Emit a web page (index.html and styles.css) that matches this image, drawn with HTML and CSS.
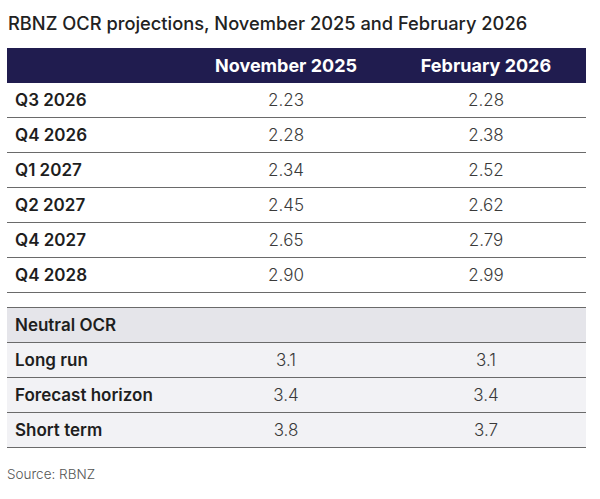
FILE: index.html
```html
<!DOCTYPE html>
<html>
<head>
<meta charset="utf-8">
<link rel="stylesheet" href="styles.css">
</head>
<body>
<div class="page">
  <h1 class="title">RBNZ OCR projections, November 2025 and February 2026</h1>
  <table class="grid">
    <colgroup><col class="c-label"><col class="c-val"><col class="c-val"></colgroup>
    <thead>
      <tr class="head"><th></th><th>November 2025</th><th>February 2026</th></tr>
    </thead>
    <tbody>
      <tr><td class="lbl">Q3 2026</td><td>2.23</td><td>2.28</td></tr>
      <tr><td class="lbl">Q4 2026</td><td>2.28</td><td>2.38</td></tr>
      <tr><td class="lbl">Q1 2027</td><td>2.34</td><td>2.52</td></tr>
      <tr><td class="lbl">Q2 2027</td><td>2.45</td><td>2.62</td></tr>
      <tr><td class="lbl">Q4 2027</td><td>2.65</td><td>2.79</td></tr>
      <tr><td class="lbl">Q4 2028</td><td>2.90</td><td>2.99</td></tr>
    </tbody>
  </table>
  <table class="grid neutral">
    <colgroup><col class="c-label"><col class="c-val"><col class="c-val"></colgroup>
    <tbody>
      <tr class="sub"><td class="lbl">Neutral OCR</td><td></td><td></td></tr>
      <tr><td class="lbl">Long run</td><td>3.1</td><td>3.1</td></tr>
      <tr><td class="lbl">Forecast horizon</td><td>3.4</td><td>3.4</td></tr>
      <tr><td class="lbl">Short term</td><td>3.8</td><td>3.7</td></tr>
    </tbody>
  </table>
  <p class="source">Source: RBNZ</p>
</div>
</body>
</html>
```
FILE: styles.css
```css
html, body {
  margin: 0;
  padding: 0;
  background: #ffffff;
}
.page {
  padding: 12px 14px 0 7px;
  font-family: Inter, "Liberation Sans", sans-serif;
  color: #222;
}
.title {
  margin: 0 0 14px 1px;
  font-size: 18.3px;
  font-weight: 500;
  line-height: 22px;
  color: #222;
}
.grid {
  width: 579px;
  border-collapse: collapse;
  table-layout: fixed;
}
.c-label { width: 179px; }
.c-val { width: 200px; }
.grid th, .grid td {
  height: 34px;
  padding: 0;
  text-align: center;
  font-size: 17px;
  font-weight: 300;
  color: #3a3a3a;
  border-bottom: 1.5px solid #6a6a6a;
}
.head th {
  height: 35px;
  background: #201c4f;
  color: #ffffff;
  font-weight: 700;
  font-size: 18px;
  border-bottom: none;
}
.grid td.lbl {
  text-align: left;
  padding-left: 8px;
  font-weight: 600;
  font-size: 17px;
  color: #1e1e1e;
}
.neutral {
  margin-top: 14px;
  border-top: 1.5px solid #6a6a6a;
}
.neutral td {
  background: #f2f2f5;
}
.neutral .sub td {
  background: #e5e5ea;
}
.source {
  margin: 18px 0 0 0;
  font-size: 13.5px;
  font-weight: 300;
  color: #555;
}
```
